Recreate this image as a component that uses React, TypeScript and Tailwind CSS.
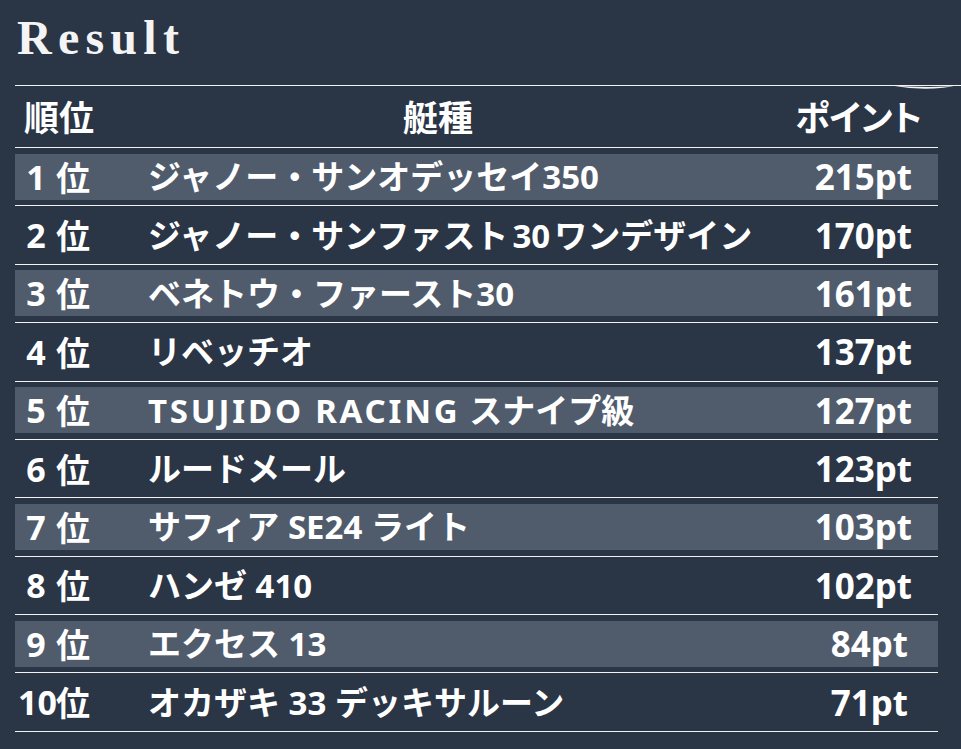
import type { ReactNode } from "react";

const rows: { num: string; name: ReactNode; pt: string }[] = [
  { num: "1", name: "ジャノー・サンオデッセイ350", pt: "215pt" },
  {
    num: "2",
    name: (
      <>
        ジャノー・サンファスト<span className="mx-[4px]">30</span>ワンデザイン
      </>
    ),
    pt: "170pt",
  },
  { num: "3", name: "ベネトウ・ファースト30", pt: "161pt" },
  { num: "4", name: "リベッチオ", pt: "137pt" },
  {
    num: "5",
    name: (
      <>
        <span className="tracking-[2.8px]">TSUJIDO RACING</span> スナイプ級
      </>
    ),
    pt: "127pt",
  },
  { num: "6", name: "ルードメール", pt: "123pt" },
  { num: "7", name: "サフィア SE24 ライト", pt: "103pt" },
  { num: "8", name: "ハンゼ 410", pt: "102pt" },
  { num: "9", name: "エクセス 13", pt: "84pt" },
  { num: "10", name: "オカザキ 33 デッキサルーン", pt: "71pt" },
];

export default function App() {
  return (
    <div className="relative w-[961px] h-[749px] overflow-hidden bg-[#2a3546] text-white font-['Noto_Sans','Noto_Sans_CJK_JP',sans-serif]">
      <h1 className="pl-[17px] pt-[14px] text-[48px] leading-[47px] tracking-[0.13em] font-bold font-['Liberation_Serif',serif] text-[#f4f4f4]">
        Result
      </h1>

      {/* top rule with the swoosh on the right */}
      <div className="relative mt-[24px] ml-[15px] h-px bg-[#f2f2f2]">
        <svg className="absolute right-0 top-0" width="70" height="6" viewBox="0 0 70 6">
          <path d="M0 0.5 Q 36 7 70 0 L70 0.8 Q 36 3.2 0 0.5 Z" fill="#f2f2f2" />
        </svg>
      </div>

      <div className="mx-[15px] w-[923px]">
        <div className="flex items-center h-[61px] text-[35px] font-bold font-['Noto_Sans_CJK_JP',sans-serif] [font-feature-settings:'palt']">
          <div className="w-[133px] pl-[9px]">順位</div>
          <div className="flex-1 text-center pr-[30px]">艇種</div>
          <div className="w-[180px] text-right pr-[16px]">ポイント</div>
        </div>

        {rows.map((r, i) => (
          <div key={r.num} className={"border-t border-[#f2f2f2] py-[5.7px]" + (i === rows.length - 1 ? " border-b" : "")}>
            <div className={"flex items-center h-[46px] text-[33px] font-bold leading-none " + (i % 2 === 0 ? "bg-[#505c6c]" : "")}>
              <div className="w-[133px] flex items-center pl-[3px] text-[34px]">
                <span className="w-[36px] text-center">{r.num}</span>
                <span className="ml-[2px] font-['Noto_Sans_CJK_JP',sans-serif]">位</span>
              </div>
              <div className="flex-1 whitespace-nowrap">{r.name}</div>
              <div className={"w-[150px] text-right text-[35px] " + (r.pt.length === 4 ? "pr-[30px]" : "pr-[26px]")}>{r.pt}</div>
            </div>
          </div>
        ))}
      </div>
    </div>
  );
}
